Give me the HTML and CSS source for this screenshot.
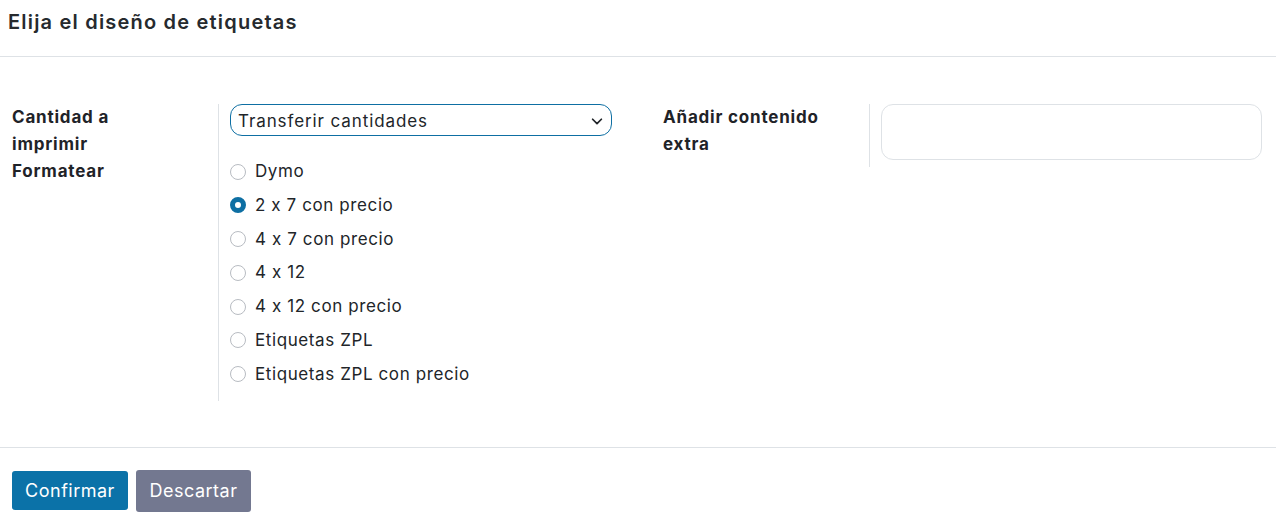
FILE: index.html
```html
<!DOCTYPE html>
<html lang="es">
<head>
<meta charset="utf-8">
<title>Elija el diseño de etiquetas</title>
<link rel="stylesheet" href="styles.css">
</head>
<body>
<div class="dialog">
  <header class="dlg-header">
    <h4 class="dlg-title">Elija el diseño de etiquetas</h4>
  </header>
  <main class="dlg-body">
    <div class="groups">
      <div class="group">
        <div class="lbl">Cantidad a imprimir</div>
        <div class="fld fld-select">
          <div class="select">
            <span>Transferir cantidades</span>
            <svg class="chev" width="14" height="14" viewBox="0 0 16 16"><path d="M3 6l5 5 5-5" fill="none" stroke="#212529" stroke-width="2" stroke-linecap="round" stroke-linejoin="round"/></svg>
          </div>
        </div>
        <div class="lbl">Formatear</div>
        <div class="fld fld-radios">
          <ul class="radios">
            <li class="radio"><span class="dot"></span>Dymo</li>
            <li class="radio"><span class="dot on"></span>2 x 7 con precio</li>
            <li class="radio"><span class="dot"></span>4 x 7 con precio</li>
            <li class="radio"><span class="dot"></span>4 x 12</li>
            <li class="radio"><span class="dot"></span>4 x 12 con precio</li>
            <li class="radio"><span class="dot"></span>Etiquetas ZPL</li>
            <li class="radio"><span class="dot"></span>Etiquetas ZPL con precio</li>
          </ul>
        </div>
      </div>
      <div class="group group-right">
        <div class="lbl">Añadir contenido extra</div>
        <div class="fld fld-text">
          <div class="textarea"></div>
        </div>
      </div>
    </div>
  </main>
  <footer class="dlg-footer">
    <button class="btn btn-primary">Confirmar</button>
    <button class="btn btn-secondary">Descartar</button>
  </footer>
</div>
</body>
</html>
```
FILE: styles.css
```css
* { box-sizing: border-box; }
body {
  margin: 0;
  background: #fff;
  font-family: Inter, "Open Sans", sans-serif;
  font-feature-settings: "calt" 0;
  font-variant-ligatures: no-contextual;
  color: #212529;
}
.dlg-header {
  height: 57px;
  padding: 8px 8px 0;
  border-bottom: 1px solid #dee2e6;
}
.dlg-title {
  margin: 0;
  font-size: 20px;
  line-height: 29px;
  font-weight: 600;
  letter-spacing: 1.2px;
  color: #262a2e;
}
.dlg-body {
  padding: 47px 14px 46px 12px;
}
.groups {
  display: grid;
  grid-template-columns: 600px 599px;
  column-gap: 51px;
  align-items: start;
}
.group {
  display: grid;
  grid-template-columns: 206px 1fr;
}
.lbl {
  font-size: 17px;
  font-weight: 700;
  line-height: 27px;
  letter-spacing: 0.8px;
  padding-right: 30px;
  color: #1f2328;
}
.fld {
  border-left: 1px solid #dee2e6;
  padding-left: 11px;
}
.fld-select { padding-top: 0; }
.select {
  height: 32px;
  border: 1px solid #0e6fa3;
  border-radius: 12px;
  display: flex;
  align-items: center;
  justify-content: space-between;
  padding: 1px 7px 0 7px;
  font-size: 17px;
  letter-spacing: 0.9px;
  color: #212529;
}
.chev { display: block; }
.radios {
  list-style: none;
  margin: 0;
  padding: 0 0 6px;
}
.radio {
  display: flex;
  align-items: center;
  gap: 9px;
  font-size: 17px;
  letter-spacing: 0.6px;
  line-height: 27px;
  margin-bottom: 6.8px;
  color: #212529;
}
.dot {
  width: 16px;
  height: 16px;
  border-radius: 50%;
  border: 1px solid #b8bcc2;
  background: #fff;
  flex: none;
}
.dot.on {
  border: 5px solid #0e6fa3;
  background: #fff;
}
.fld-text { padding-top: 0; padding-bottom: 7px; }
.textarea {
  height: 56px;
  border: 1px solid #dee2e6;
  border-radius: 12px;
}
.dlg-footer {
  border-top: 1px solid #dee2e6;
  padding: 22px 12px 0;
  display: flex;
  align-items: center;
  gap: 8px;
}
.btn {
  border: none;
  font-family: inherit;
  font-size: 18px;
  letter-spacing: 0.5px;
  color: #fff;
  border-radius: 3px;
  padding: 0;
  display: flex;
  align-items: center;
  justify-content: center;
}
.btn-primary {
  background: #0b72a8;
  width: 116px;
  height: 39px;
}
.btn-secondary {
  background: #737890;
  width: 115px;
  height: 42px;
}
```
